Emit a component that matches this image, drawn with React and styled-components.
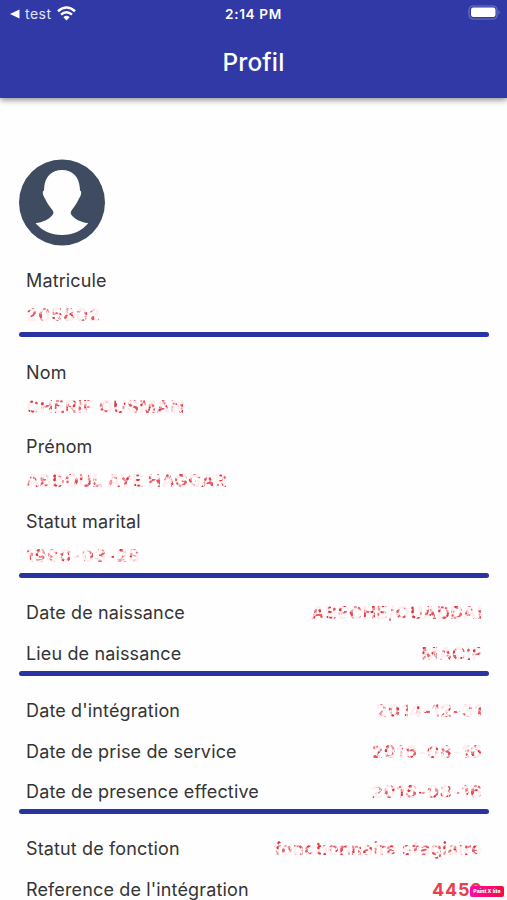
import styled, { createGlobalStyle } from "styled-components";

const GlobalStyle = createGlobalStyle`
  * {
    box-sizing: border-box;
  }
  body {
    margin: 0;
    background: #fefefe;
    font-family: Inter, "Liberation Sans", sans-serif;
    overflow: hidden;
  }
`;

const Screen = styled.div`
  width: 507px;
  height: 900px;
  overflow: hidden;
  position: relative;
`;

const Header = styled.header`
  height: 98px;
  background: #3039a5;
  color: #fff;
  box-shadow: 0 2px 6px rgba(0, 0, 0, 0.45);
`;

const StatusBar = styled.div`
  display: grid;
  grid-template-columns: 1fr auto 1fr;
  align-items: center;
  height: 28px;
  padding: 0 7px 0 9px;
`;

const BackApp = styled.div`
  display: flex;
  align-items: center;
  font-size: 14px;
  letter-spacing: 0.5px;
  line-height: 20px;

  span {
    margin: 0 5px 0 5px;
    color: #e3e4f7;
  }

  svg:last-child {
    margin-top: -2px;
  }
`;

const Clock = styled.div`
  font-size: 13.6px;
  font-weight: 600;
  letter-spacing: 0.65px;
  margin-left: -2px;
`;

const Battery = styled.svg`
  justify-self: end;
  margin-top: -4px;
  margin-right: -1px;
`;

const Title = styled.h1`
  margin: 0;
  padding-top: 18px;
  font-size: 24.4px;
  line-height: 33px;
  font-weight: 500;
  letter-spacing: 0.15px;
  text-align: center;
`;

const Content = styled.main`
  padding: 61px 18px 0 19px;
`;

const Avatar = styled.svg`
  display: block;
  margin-bottom: 18px;
`;

const Section = styled.section`
  display: flex;
  flex-direction: column;
  gap: ${(props) => (props.$stacked ? "6.6px" : "6.3px")};
  padding: ${(props) => (props.$first ? "0" : "18.6px")} 7px 0;
`;

const Field = styled.div`
  display: flex;
  flex-direction: ${(props) => (props.$stacked ? "column" : "row")};
  justify-content: space-between;
  align-items: ${(props) => (props.$stacked ? "flex-start" : "center")};
`;

const Label = styled.div`
  font-size: 18px;
  line-height: 34px;
  letter-spacing: 0.14px;
  color: #343434;
  white-space: nowrap;
`;

const scatter = (n) => {
  const v = Math.sin(n * 12.9898) * 43758.5453;
  return v - Math.floor(v);
};

// specks scattered over one 83x34 tile, always the same ones
const inks = ["#df3741", "#e8606a", "#ef8f96", "#e2525b"];
const specks = Array.from({ length: 105 }, (_, i) => {
  const x = scatter(i + 1) * 81 + 1;
  const y = 9 + scatter(i + 201) * 17;
  const r = 0.4 + scatter(i + 401) * 0.8;
  return `radial-gradient(circle at ${x.toFixed(1)}px ${y.toFixed(1)}px, ${inks[i % 4]} 0 ${r.toFixed(2)}px, transparent ${(r + 0.9).toFixed(2)}px)`;
}).join(", ");

// scratched out values: only specks of the red ink are left
const Value = styled.div`
  font-size: 18px;
  font-weight: 700;
  line-height: 34px;
  letter-spacing: ${(props) => props.$spacing || 0}px;
  margin-right: ${(props) => -(props.$spacing || 0)}px;
  white-space: nowrap;
  color: ${(props) => (props.$clear ? "#e8414c" : "transparent")};
  ${(props) =>
    !props.$clear &&
    `
    background-color: #fdeeef;
    background-image: ${specks};
    background-size: 83px 34px;
    background-position: ${props.$shift || 0}px 0;
    -webkit-background-clip: text;
    background-clip: text;
  `}
`;

const Divider = styled.div`
  height: 5px;
  border-radius: 3px;
  background: #2a33a2;
`;

const Badge = styled.div`
  position: absolute;
  left: 470px;
  top: 886px;
  width: 34px;
  height: 11px;
  border-radius: 2px;
  background: linear-gradient(90deg, #fb0aa9, #f50b3d);
  color: #fff;
  font-size: 5.2px;
  font-weight: 800;
  line-height: 10.5px;
  text-align: center;
  white-space: nowrap;
`;

const sections = [
  {
    stacked: true,
    fields: [{ label: "Matricule", value: "205802", spacing: 0.8 }],
  },
  {
    stacked: true,
    fields: [
      { label: "Nom", value: "CHERIF OUSMAN", spacing: 0.5 },
      { label: "Prénom", value: "ABDOUL AYE HAGGAR", spacing: 0.15 },
      { label: "Statut marital", value: "1990-03-28", spacing: 0.8 },
    ],
  },
  {
    fields: [
      { label: "Date de naissance", value: "ABECHE/OUADDAI", spacing: 0.45 },
      { label: "Lieu de naissance", value: "MACIF", spacing: 0.5 },
    ],
  },
  {
    fields: [
      { label: "Date d'intégration", value: "2014-12-31", spacing: 0.85 },
      { label: "Date de prise de service", value: "2016-08-16", spacing: 0.8 },
      { label: "Date de presence effective", value: "2016-08-16", spacing: 0.8 },
    ],
  },
  {
    last: true,
    fields: [
      { label: "Statut de fonction", value: "fonctionnaire stagiaire", spacing: 0.45 },
      { label: "Reference de l'intégration", value: "4459", spacing: 0.8, clear: true },
    ],
  },
];

function App() {
  return (
    <>
      <GlobalStyle />
      <Screen>
        <Header>
          <StatusBar>
            <BackApp>
              <svg width="11" height="10" viewBox="0 0 11 10">
                <path d="M1 5 10.5 0.5V9.5Z" fill="#fff" />
              </svg>
              <span>test</span>
              <svg width="19" height="15" viewBox="0 0 19 15" fill="none" stroke="#fff" strokeWidth="2.5">
                <path d="M1 5.3Q9.5-2.3 18 5.3" />
                <path d="M4 8.6Q9.5 3.8 15 8.6" />
                <path d="M6.4 11.2Q9.5 8.3 12.6 11.2L9.5 14.4Z" fill="#fff" stroke="none" />
              </svg>
            </BackApp>
            <Clock>2:14 PM</Clock>
            <Battery width="33" height="15" viewBox="0 0 33 15">
              <rect x="1" y="1" width="28" height="13" rx="4" fill="none" stroke="#7378c4" strokeWidth="1.1" />
              <rect x="3" y="2.5" width="24.5" height="9.5" rx="2.2" fill="#fff" />
              <path d="M30.5 5.3Q33 7.5 30.5 9.7Z" fill="#7378c4" />
            </Battery>
          </StatusBar>
          <Title>Profil</Title>
        </Header>

        <Content>
          <Avatar width="86" height="87" viewBox="0 0 86 87">
            <circle cx="43" cy="43.5" r="43" fill="#3f4b61" />
            <path
              d="M43 11C32.5 11 26 18 25.2 28.5L25 31.5Q23.3 32 23.8 34.2C24.3 36.8 25 38 26 39.5C28 44 30.5 47.5 33.8 51.5Q35.3 54 33.5 56C30 60.5 24 63.2 16.5 64.2C23 71.5 32 76 43 76S63 71.5 69.3 64.2C62 63.2 56 60.5 52.5 56Q50.8 54 52.5 51.5C55.5 47.5 58 44 60 39.5C61 38 61.8 36.8 62.2 34.2Q62.7 32 61 31.5L60.8 28.5C60 18 53.5 11 43 11Z"
              fill="#fefefe"
            />
          </Avatar>

          {sections.map((section, index) => (
            <div key={index}>
              <Section $stacked={section.stacked} $first={index === 0}>
                {section.fields.map((field, i) => (
                  <Field key={field.label} $stacked={section.stacked}>
                    <Label>{field.label}</Label>
                    <Value
                      $spacing={field.spacing}
                      $clear={field.clear}
                      $shift={index * 13 + i * 23}>
                      {field.value}
                    </Value>
                  </Field>
                ))}
              </Section>
              {!section.last && <Divider />}
            </div>
          ))}
        </Content>

        <Badge>Paint X lite</Badge>
      </Screen>
    </>
  );
}

export default App;
